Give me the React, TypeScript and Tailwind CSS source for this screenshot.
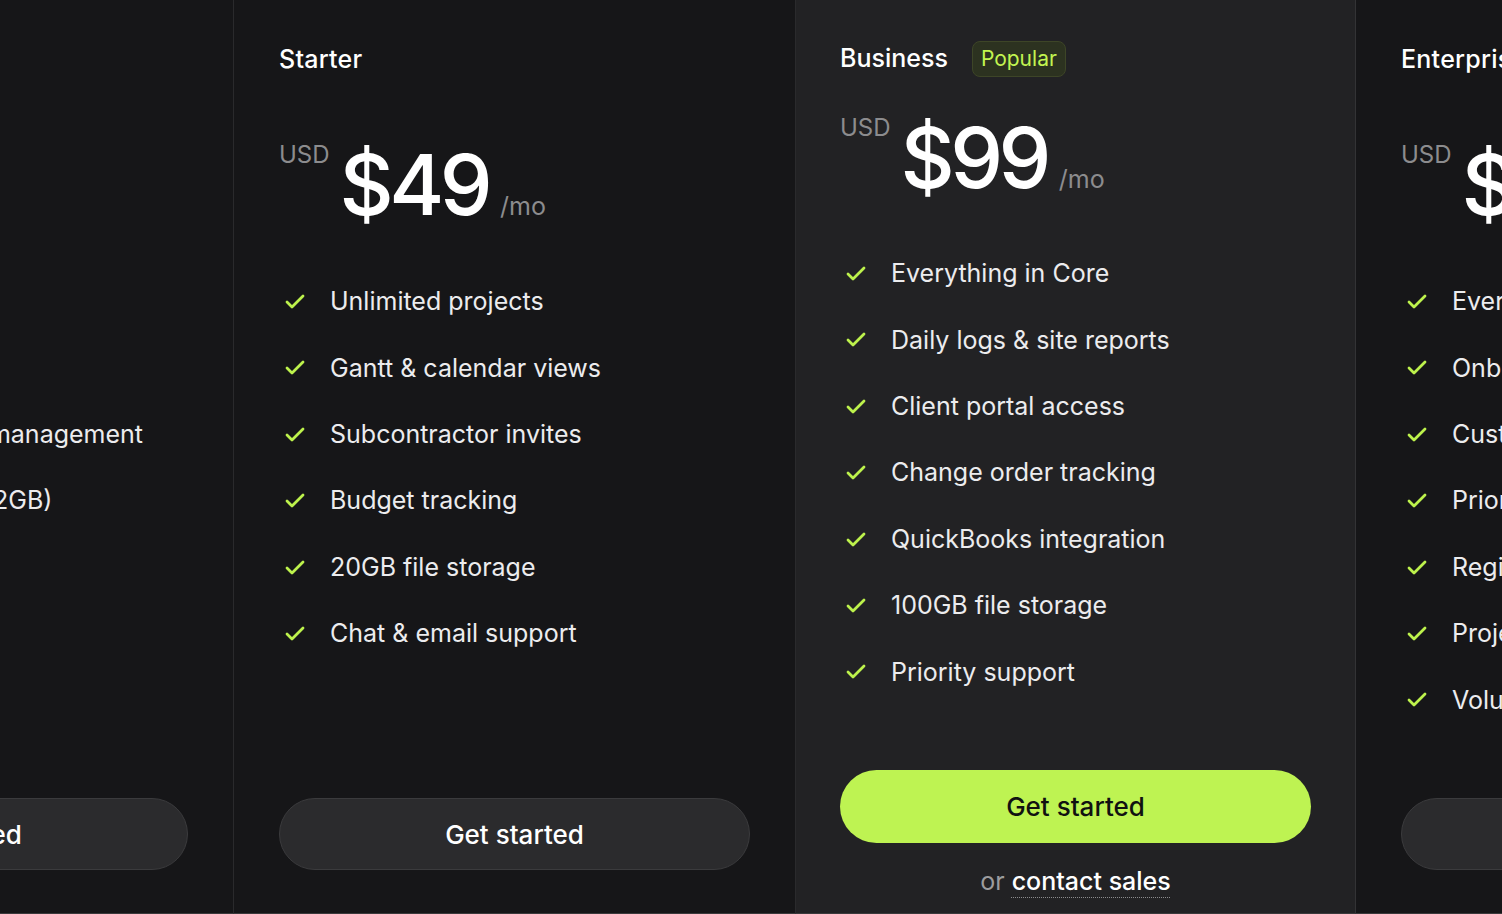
import { Check } from "lucide-react";

type Plan = {
  name: string;
  price: string;
  features: string[];
  popular?: boolean;
};

const plans: Plan[] = [
  {
    name: "Core",
    price: "$19",
    features: [
      "Up to 3 projects",
      "Task scheduling",
      "Team & document management",
      "Cloud file storage (2GB)",
    ],
  },
  {
    name: "Starter",
    price: "$49",
    features: [
      "Unlimited projects",
      "Gantt & calendar views",
      "Subcontractor invites",
      "Budget tracking",
      "20GB file storage",
      "Chat & email support",
    ],
  },
  {
    name: "Business",
    price: "$99",
    popular: true,
    features: [
      "Everything in Core",
      "Daily logs & site reports",
      "Client portal access",
      "Change order tracking",
      "QuickBooks integration",
      "100GB file storage",
      "Priority support",
    ],
  },
  {
    name: "Enterprise",
    price: "$249",
    features: [
      "Everything in Business",
      "Onboarding & training",
      "Custom integrations",
      "Priority phone support",
      "Regional data hosting",
      "Project templates",
      "Volume discounts",
    ],
  },
];

const font = { fontFamily: "Inter, 'Noto Sans', sans-serif" };

const Price = ({ value }: { value: string }) => (
  <div className="flex items-baseline">
    <span className="self-start text-[24px] leading-none text-[#8c8c8e]">USD</span>
    <span className="ml-[10px] text-[84px] leading-none font-medium tracking-[-0.055em] text-white">
      {value}
    </span>
    <span className="ml-[12px] text-[25px] leading-none text-[#8c8c8e]">/mo</span>
  </div>
);

const Features = ({ items }: { items: string[] }) => (
  <ul className="flex flex-col gap-[30.4px]">
    {items.map((f) => (
      <li key={f} className="flex items-center gap-[23px] pl-1 h-[36px] whitespace-nowrap">
        <Check className="w-6 h-6 shrink-0 text-[#bdf24c]" strokeWidth={2.8} />
        <span className="text-[25px] text-[#ececee]">{f}</span>
      </li>
    ))}
  </ul>
);

const PlanColumn = ({ plan, width }: { plan: Plan; width: string }) => {
  if (plan.popular) {
    return (
      <div
        className={`${width} shrink-0 h-[914px] flex flex-col bg-[#222224] border-r border-b border-r-[#333335] border-b-[#3a3a3c] pt-[41px] px-[44px] pb-[14px]`}
      >
        <div className="flex items-center h-[36px] gap-[24px]">
          <h3 className="text-[25px] font-medium text-white">{plan.name}</h3>
          <span className="h-[36px] flex items-center px-[8px] rounded-lg border border-[#3d4527] bg-[#2c3220] text-[21px] text-[#c3f550]">
            Popular
          </span>
        </div>
        <div className="mt-[39px]">
          <Price value={plan.price} />
        </div>
        <div className="mt-[56px]">
          <Features items={plan.features} />
        </div>
        <button className="mt-auto h-[73px] w-full rounded-full bg-[#bef352] text-[26px] font-medium text-[#111]">
          Get started
        </button>
        <p className="mt-[20px] text-center text-[25px] leading-[36px]">
          <span className="text-[#9c9c9e]">or </span>
          <a className="font-medium text-white underline decoration-dotted decoration-[#8c8c8e] decoration-1 underline-offset-[7px]">
            contact sales
          </a>
        </p>
      </div>
    );
  }
  return (
    <div
      className={`${width} shrink-0 h-[914px] flex flex-col bg-[#161618] border-r border-b border-r-[#2a2a2c] border-b-[#3a3a3c] pt-[41px] px-[45px] pb-[43px]`}
    >
      <h3 className="text-[25px] leading-[36px] font-medium tracking-[0.01em] text-white">{plan.name}</h3>
      <div className="mt-[66px]">
        <Price value={plan.price} />
      </div>
      <div className="mt-[57px]">
        <Features items={plan.features} />
      </div>
      <button className="mt-auto h-[72px] w-full rounded-full bg-[#2b2b2d] border border-[#3b3b3d] text-[26px] font-medium text-white">
        Get started
      </button>
    </div>
  );
};

export default function App() {
  return (
    <div className="w-full h-[914px] overflow-hidden bg-[#161618]" style={font}>
      {/* carousel scrolled so Core is partly off-screen */}
      <div className="flex -ml-[328px]">
        <PlanColumn plan={plans[0]} width="w-[562px]" />
        <PlanColumn plan={plans[1]} width="w-[562px]" />
        <PlanColumn plan={plans[2]} width="w-[560px]" />
        <PlanColumn plan={plans[3]} width="w-[561px]" />
      </div>
    </div>
  );
}
